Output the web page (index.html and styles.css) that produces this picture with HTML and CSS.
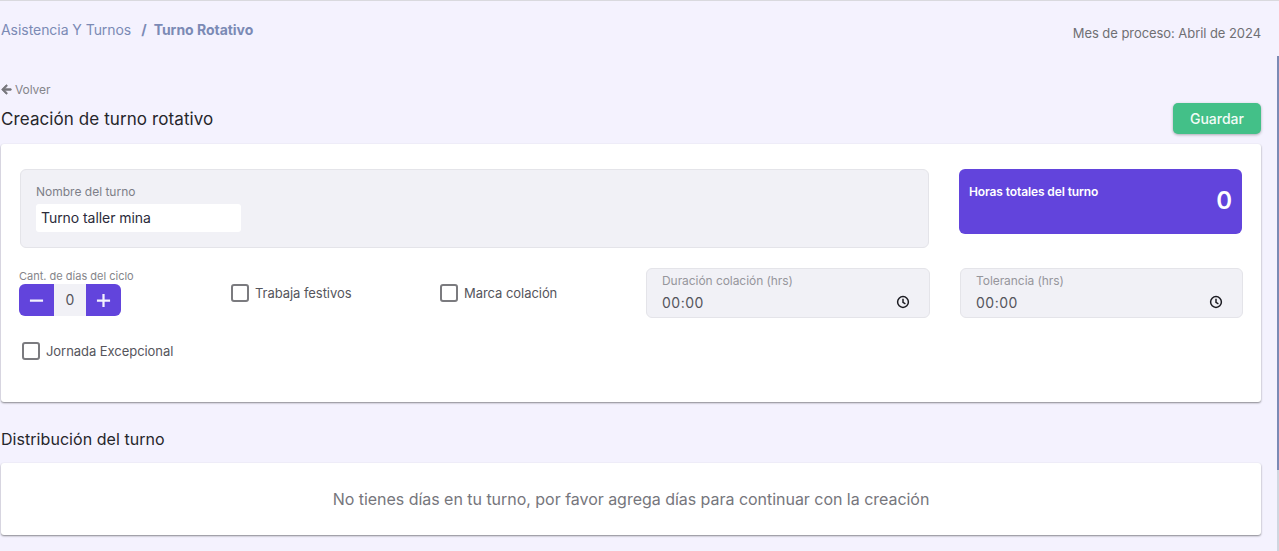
FILE: index.html
```html
<!DOCTYPE html>
<html lang="es">
<head>
<meta charset="utf-8">
<title>Creación de turno rotativo</title>
<link rel="stylesheet" href="styles.css">
</head>
<body>
<div class="scrollbar"><div class="scrollbar-thumb"></div></div>
<main class="page">
  <header class="topbar">
    <nav class="crumbs">
      <span class="crumb">Asistencia Y Turnos</span>
      <span class="crumb-sep">/</span>
      <span class="crumb-current">Turno Rotativo</span>
    </nav>
    <span class="period">Mes de proceso: Abril de 2024</span>
  </header>

  <a class="back">
    <svg class="back-icon" viewBox="0 0 448 512"><path fill="currentColor" stroke="currentColor" stroke-width="36" d="M257.5 445.1l-22.2 22.2c-9.4 9.4-24.6 9.4-33.9 0L7 273c-9.4-9.4-9.4-24.6 0-33.9L201.4 44.7c9.4-9.4 24.6-9.4 33.9 0l22.2 22.2c9.5 9.5 9.3 25-.4 34.3L136.6 216H424c13.3 0 24 10.7 24 24v32c0 13.3-10.7 24-24 24H136.6l120.5 114.8c9.8 9.3 10 24.8.4 34.3z"/></svg>
    Volver
  </a>
  <div class="title-row">
    <h1 class="title">Creación de turno rotativo</h1>
    <button class="save">Guardar</button>
  </div>

  <section class="card form-card">
    <div class="row-top">
      <div class="name-box">
        <label class="name-label">Nombre del turno</label>
        <div class="name-input">Turno taller mina</div>
      </div>
      <div class="hours">
        <span class="hours-label">Horas totales del turno</span>
        <span class="hours-value">0</span>
      </div>
    </div>

    <div class="row-fields">
      <div class="stepper-field">
        <span class="stepper-label">Cant. de días del ciclo</span>
        <div class="stepper">
          <span class="step">
            <svg class="step-icon" viewBox="0 0 16 16"><path d="M1 8h14" /></svg>
          </span>
          <span class="step-value">0</span>
          <span class="step">
            <svg class="step-icon" viewBox="0 0 16 16"><path d="M1 8h14M8 1v14" /></svg>
          </span>
        </div>
      </div>
      <label class="check"><span class="box"></span>Trabaja festivos</label>
      <label class="check"><span class="box"></span>Marca colación</label>
      <div class="time-box time-first">
        <span class="time-label">Duración colación (hrs)</span>
        <div class="time-line">
          <span class="time-value">00:00</span>
          <svg class="clock" viewBox="0 0 14 14"><circle cx="7" cy="7" r="5.4"/><path d="M7 3.8V7.4L9.4 8.8"/></svg>
        </div>
      </div>
      <div class="time-box">
        <span class="time-label">Tolerancia (hrs)</span>
        <div class="time-line">
          <span class="time-value">00:00</span>
          <svg class="clock" viewBox="0 0 14 14"><circle cx="7" cy="7" r="5.4"/><path d="M7 3.8V7.4L9.4 8.8"/></svg>
        </div>
      </div>
    </div>

    <label class="check check-special"><span class="box"></span>Jornada Excepcional</label>
  </section>

  <h2 class="section-title">Distribución del turno</h2>
  <section class="card empty-card">No tienes días en tu turno, por favor agrega días para continuar con la creación</section>
</main>
</body>
</html>
```

FILE: styles.css
```css
* { box-sizing: border-box; }

html, body {
  height: 100%;
  overflow: hidden;
}

body {
  margin: 0;
  background: #f4f2fe;
  border-top: 1px solid #d9d9de;
  font-family: Inter, "Liberation Sans", sans-serif;
  color: #212529;
}

.page {
  padding: 0 18px 0 1px;
}

.scrollbar {
  position: absolute;
  top: 56px;
  right: 0;
  bottom: 0;
  width: 2px;
  background: #cfd6e0;
}

.scrollbar-thumb {
  height: 414px;
  background: #7b8ab5;
}

.topbar {
  display: flex;
  justify-content: space-between;
  height: 78px;
}

.crumbs {
  display: flex;
  gap: 10px;
  padding-top: 20px;
  font-size: 14px;
  line-height: 17px;
  color: #7b8ab5;
  height: 37px;
}

.crumb { letter-spacing: -0.05px; }
.crumb-sep, .crumb-current { font-weight: 700; }
.crumb-current { margin-left: -3px; letter-spacing: -0.03px; }

.period {
  padding-top: 24px;
  font-size: 13px;
  line-height: 16px;
  letter-spacing: -0.06px;
  color: #6f6f73;
}

.back {
  display: flex;
  align-items: center;
  gap: 3px;
  height: 20px;
  font-size: 12px;
  letter-spacing: -0.08px;
  color: #85858a;
}

.back-icon { width: 11px; height: 11px; color: #77777c; }

.title-row {
  display: flex;
  justify-content: space-between;
  align-items: center;
  height: 35px;
  margin-top: 1px;
}

.title {
  margin: 3px 0 0;
  font-size: 17px;
  font-weight: 400;
  line-height: 20px;
  letter-spacing: 0.09px;
  color: #26262b;
}

.save {
  width: 88px;
  height: 31px;
  border: 0;
  border-radius: 5px;
  background: #43c088;
  color: #f2fbf7;
  font: 500 14px Inter, "Liberation Sans", sans-serif;
  box-shadow: 0 1px 3px rgba(0, 0, 0, .3);
  margin-top: 2px;
}

.card {
  background: #fff;
  border-radius: 3px;
  box-shadow: 0 1px 2px rgba(0, 0, 0, .45);
}

.form-card {
  height: 258px;
  margin-top: 9px;
  padding: 25px 0 0 19px;
}

.row-top {
  display: flex;
  gap: 30px;
  align-items: flex-start;
}

.name-box {
  width: 909px;
  height: 79px;
  padding: 14px 15px 0;
  background: #f1f1f6;
  border: 1px solid #e4e4e9;
  border-radius: 6px;
}

.name-label {
  display: block;
  font-size: 12px;
  line-height: 15px;
  color: #7d7f88;
}

.name-input {
  width: 205px;
  height: 28px;
  margin-top: 5px;
  padding: 0 5px;
  background: #fff;
  border-radius: 3px;
  font-size: 14px;
  line-height: 28px;
  letter-spacing: -0.06px;
  color: #2b2b3a;
}

.hours {
  display: flex;
  justify-content: space-between;
  width: 283px;
  height: 65px;
  padding: 15px 10px 0;
  background: #6244dc;
  border-radius: 6px;
  color: #fff;
}

.hours-label {
  font-size: 12px;
  font-weight: 600;
  line-height: 15px;
  letter-spacing: -0.11px;
}

.hours-value {
  font-size: 24px;
  font-weight: 600;
  line-height: 34px;
}

.row-fields {
  display: grid;
  grid-template-columns: 211px 209px 206px 314px 283px;
  align-items: start;
  margin-top: 20px;
}

.stepper-field { padding-top: 2px; margin-left: -1px; }

.stepper-label {
  display: block;
  font-size: 11px;
  line-height: 13px;
  color: #85858a;
}

.stepper {
  display: flex;
  width: 102px;
  height: 32px;
  margin-top: 1px;
  background: #f1f1f6;
  border-radius: 6px;
  overflow: hidden;
}

.step {
  display: flex;
  align-items: center;
  justify-content: center;
  width: 35px;
  background: #6244dc;
}

.step-icon {
  width: 15px;
  height: 15px;
  fill: none;
  stroke: #f4f2fe;
  stroke-width: 2.4;
}

.step-value {
  flex: 1;
  text-align: center;
  font-size: 14px;
  line-height: 32px;
  color: #55555c;
}

.check {
  display: flex;
  align-items: center;
  gap: 6px;
  height: 18px;
  margin-top: 16px;
  font-size: 13px;
  letter-spacing: -0.05px;
  color: #55555c;
}

.box {
  width: 18px;
  height: 18px;
  border: 2px solid #7b7b7f;
  border-radius: 3px;
  background: #fff;
}

.check-special {
  margin: 24px 0 0 2px;
}

.time-box {
  width: 283px;
  height: 50px;
  padding: 5px 15px 0;
  background: #f1f1f6;
  border: 1px solid #e4e4e9;
  border-radius: 6px;
}

.time-first { width: 284px; }

.time-label {
  display: block;
  font-size: 12px;
  line-height: 13px;
  letter-spacing: -0.06px;
  color: #96969c;
}

.time-line {
  display: flex;
  justify-content: space-between;
  align-items: center;
  height: 20px;
  margin-top: 5px;
  font-size: 14px;
  color: #55555c;
}

.time-value { letter-spacing: 0.5px; }

.clock {
  width: 14px;
  height: 14px;
  margin-right: 4px;
  fill: none;
  stroke: #1c1c22;
  stroke-width: 1.5;
}

.section-title {
  margin: 28px 0 15px;
  font-size: 16px;
  font-weight: 400;
  line-height: 18px;
  letter-spacing: 0.05px;
  color: #26262b;
}

.empty-card {
  height: 72px;
  text-align: center;
  font-size: 16px;
  line-height: 72px;
  letter-spacing: -0.03px;
  color: #76767c;
}
```
